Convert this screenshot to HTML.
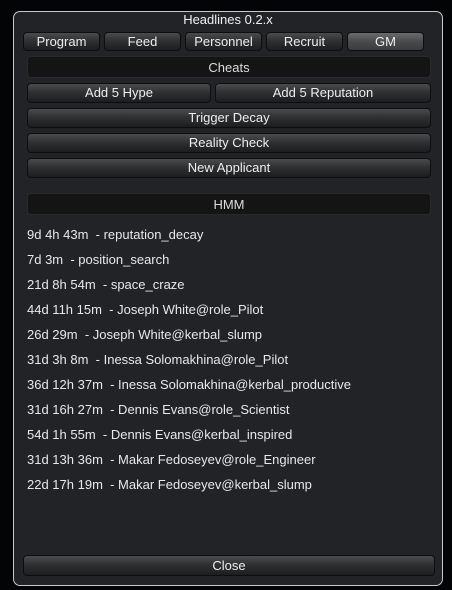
<!DOCTYPE html>
<html><head><style>
body{margin:0;width:452px;height:590px;background:#030406;font-family:"Liberation Sans",sans-serif;font-size:13px;color:#e8e8e8;position:relative;overflow:hidden}
.win{position:absolute;left:13px;top:11px;width:428px;height:573px;border:1.5px solid #c8c8c8;border-radius:7px;background:#222326}
.title{position:absolute;left:13px;top:12px;width:430px;text-align:center;font-size:13px;color:#f0f0f0}
.b{position:absolute;height:19px;line-height:18px;text-align:center;border:1px solid #0e0e0e;border-radius:4px;background:linear-gradient(#4a4b4d 0%,#303133 45%,#1c1d1f 100%);color:#eee;box-sizing:border-box}
.gm{background:linear-gradient(#6a6b6d,#4a4b4d 50%,#3a3b3d)}
.box{position:absolute;height:22px;line-height:21px;text-align:center;border:1px solid #2a2a2a;border-radius:4px;background:#141415;box-sizing:border-box;color:#ddd}
.l{position:absolute;left:27px;white-space:nowrap}
</style></head><body>
<div class="win"></div>
<div class="title">Headlines 0.2.x</div>
<div class="b" style="left:23px;top:32px;width:77px">Program</div>
<div class="b" style="left:104px;top:32px;width:77px">Feed</div>
<div class="b" style="left:185px;top:32px;width:77px">Personnel</div>
<div class="b" style="left:266px;top:32px;width:77px">Recruit</div>
<div class="b gm" style="left:347px;top:32px;width:77px">GM</div>
<div class="box" style="left:27px;top:56px;width:404px">Cheats</div>
<div class="b" style="left:27px;top:83px;width:184px;height:20px">Add 5 Hype</div>
<div class="b" style="left:215px;top:83px;width:216px;height:20px">Add 5 Reputation</div>
<div class="b" style="left:27px;top:108px;width:404px;height:20px">Trigger Decay</div>
<div class="b" style="left:27px;top:133px;width:404px;height:20px">Reality Check</div>
<div class="b" style="left:27px;top:158px;width:404px;height:20px">New Applicant</div>
<div class="box" style="left:27px;top:193px;width:404px">HMM</div>
<div class="l" style="top:227px">9d 4h 43m&nbsp; - reputation_decay</div>
<div class="l" style="top:252px">7d 3m&nbsp; - position_search</div>
<div class="l" style="top:277px">21d 8h 54m&nbsp; - space_craze</div>
<div class="l" style="top:302px">44d 11h 15m&nbsp; - Joseph White@role_Pilot</div>
<div class="l" style="top:327px">26d 29m&nbsp; - Joseph White@kerbal_slump</div>
<div class="l" style="top:352px">31d 3h 8m&nbsp; - Inessa Solomakhina@role_Pilot</div>
<div class="l" style="top:377px">36d 12h 37m&nbsp; - Inessa Solomakhina@kerbal_productive</div>
<div class="l" style="top:402px">31d 16h 27m&nbsp; - Dennis Evans@role_Scientist</div>
<div class="l" style="top:427px">54d 1h 55m&nbsp; - Dennis Evans@kerbal_inspired</div>
<div class="l" style="top:452px">31d 13h 36m&nbsp; - Makar Fedoseyev@role_Engineer</div>
<div class="l" style="top:477px">22d 17h 19m&nbsp; - Makar Fedoseyev@kerbal_slump</div>
<div class="b" style="left:23px;top:555px;width:412px;height:21px;line-height:20px">Close</div>
</body></html>
